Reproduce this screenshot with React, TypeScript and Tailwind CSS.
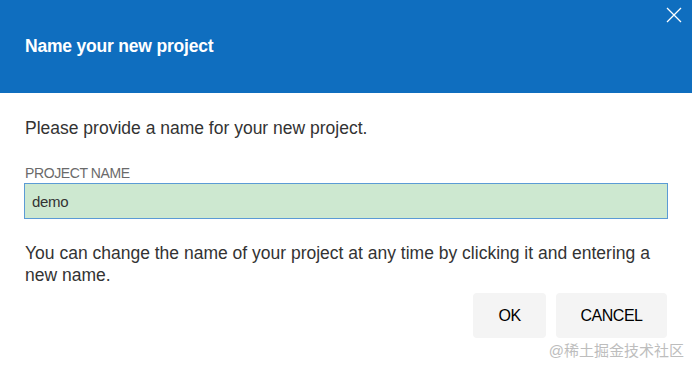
import React from "react";

export default function App() {
  return (
    <div className="w-[692px] h-[371px] bg-white overflow-hidden relative" style={{ fontFamily: '"Liberation Sans", Arial, sans-serif' }}>
      <div className="h-[93px] bg-[#0f6ebf] relative flex items-center px-[25px]">
        <h1 className="text-white font-bold text-[17.5px] leading-none tracking-[-0.2px]">Name your new project</h1>
        <button className="absolute right-[10px] top-[6px] w-[17px] h-[17px] flex items-center justify-center">
          <svg width="16" height="16" viewBox="0 0 16 16" fill="none" stroke="white" strokeWidth="1.3">
            <path d="M1 1 L15 15 M15 1 L1 15" />
          </svg>
        </button>
      </div>
      <div className="px-[24px]">
        <p className="text-[17.5px] leading-[22px] text-[#333] mt-[24px] ml-[1px]">Please provide a name for your new project.</p>
        <label className="block text-[14px] leading-[16px] text-[#6a6a6a] mt-[26px] ml-[1px] tracking-[-0.4px]">PROJECT NAME</label>
        <input
          readOnly
          value="demo"
          className="block w-[644px] h-[36px] mt-[2px] bg-[#cde8d0] border border-[#5b9bd5] px-[7px] text-[15px] text-[#333] outline-none tracking-[-0.3px]"
          style={{ fontFamily: '"Liberation Sans", Arial, sans-serif' }}
        />
        <p className="text-[17.5px] leading-[22px] text-[#333] mt-[23px] ml-[1px] w-[644px]">
          You can change the name of your project at any time by clicking it and entering a new name.
        </p>
        <div className="flex justify-end gap-[10px] mt-[7px] mr-[1px]">
          <button className="w-[73px] h-[45px] bg-[#f4f4f4] rounded-[4px] text-[16px] text-black tracking-[-0.5px]">OK</button>
          <button className="w-[111px] h-[45px] bg-[#f4f4f4] rounded-[4px] text-[16px] text-black tracking-[-0.5px]">CANCEL</button>
        </div>
      </div>
      <div className="absolute right-[8px] top-[342px] text-[15px] leading-[17px] text-[#bdbdbd]" style={{ fontFamily: '"Liberation Sans", "Noto Sans CJK SC", sans-serif' }}>
        @稀土掘金技术社区
      </div>
    </div>
  );
}
